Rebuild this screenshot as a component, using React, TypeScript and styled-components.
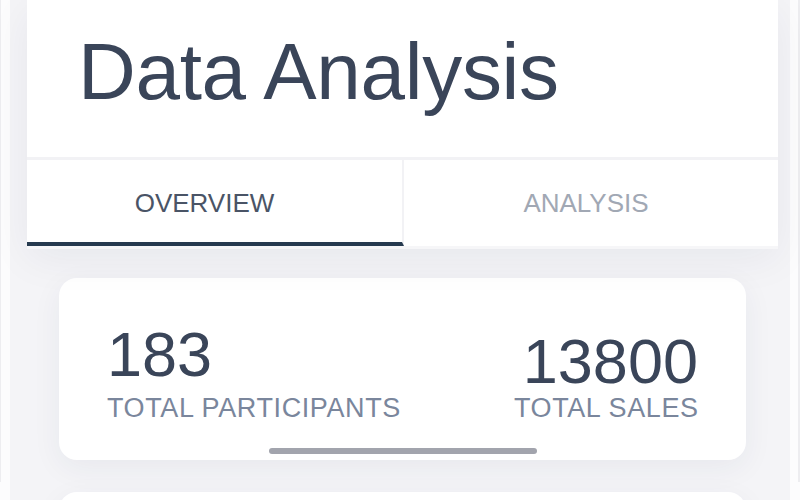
import { FC } from "react";
import styled, { createGlobalStyle } from "styled-components";

const colors = {
  ink: "#3a4559",
  tabActive: "#4a5466",
  tabIdle: "#a1a8b4",
  label: "#7a869c",
  line: "#f2f2f5",
  screen: "#f4f4f7",
};

const GlobalStyle = createGlobalStyle`
  html, body {
    margin: 0;
    padding: 0;
    background: #fcfcfd;
    font-family: "Liberation Sans", Arial, sans-serif;
  }
`;

const stats = [
  { value: "183", label: "TOTAL PARTICIPANTS", raise: 7 },
  { value: "13800", label: "TOTAL SALES", raise: 0 },
];

const App: FC = () => {
  return (
    <>
      <GlobalStyle />
      <Page>
        <Gutter $side="left" />
        <Screen>
          <Header>
            <TitleRow>
              <Title>Data Analysis</Title>
            </TitleRow>
            <Tabs>
              <Tab $active $shift={20}>
                OVERVIEW
              </Tab>
              <Tab $shift={10}>ANALYSIS</Tab>
            </Tabs>
          </Header>

          <Content>
            <Card>
              {stats.map((s, i) => (
                <Stat key={s.label} $align={i === 0 ? "flex-start" : "flex-end"}>
                  <Number $raise={s.raise}>{s.value}</Number>
                  <Label>{s.label}</Label>
                </Stat>
              ))}
              <ScrollHandle />
            </Card>
            <Card />
          </Content>
        </Screen>
        <Gutter $side="right" />
      </Page>
    </>
  );
};

export default App;

const Page = styled.div`
  display: flex;
  height: 500px;
  overflow: hidden;
`;

const Gutter = styled.div<{ $side: "left" | "right" }>`
  width: 10px;
  height: 482px;
  box-sizing: border-box;
  ${({ $side }) =>
    $side === "left"
      ? "border-left: 1px solid #ededf0;"
      : "border-right: 2px solid #ededf0;"}
`;

const Screen = styled.div`
  width: 780px;
  height: 500px;
  display: flex;
  flex-direction: column;
  padding: 0 12px 0 17px;
  box-sizing: border-box;
  background: ${colors.screen};
`;

const Header = styled.div`
  background: #fff;
  border-bottom: 3px solid #f6f6f8;
  box-shadow: 0 10px 40px rgba(20, 30, 60, 0.06);
  position: relative;
  z-index: 1;
`;

const TitleRow = styled.div`
  height: 160px;
  box-sizing: border-box;
  padding: 32px 0 0 51px;
  border-bottom: 3px solid ${colors.line};
`;

const Title = styled.h1`
  margin: 0;
  font-size: 80px;
  line-height: 80px;
  font-weight: 400;
  letter-spacing: -0.3px;
  color: ${colors.ink};
`;

const Tabs = styled.div`
  display: grid;
  grid-template-columns: 377px 1fr;
  height: 86px;
`;

const Tab = styled.div<{ $active?: boolean; $shift: number }>`
  display: flex;
  align-items: center;
  justify-content: center;
  box-sizing: border-box;
  font-size: 26px;
  color: ${({ $active }) => ($active ? colors.tabActive : colors.tabIdle)};
  border-bottom: 4px solid
    ${({ $active }) => ($active ? "#263a4f" : "transparent")};
  padding: 4px ${({ $shift }) => $shift}px 0 0;

  &:first-child {
    border-right: 2px solid ${colors.line};
  }
`;

const Content = styled.div`
  display: flex;
  flex-direction: column;
  gap: 32px;
  padding: 29px 32px 0;
`;

const Card = styled.div`
  position: relative;
  flex-shrink: 0;
  height: 182px;
  box-sizing: border-box;
  display: flex;
  justify-content: space-between;
  align-items: flex-end;
  padding: 0 48px 37px;
  background: #fff;
  border-radius: 18px;
  box-shadow: 0 8px 30px rgba(40, 50, 80, 0.06);
`;

const Stat = styled.div<{ $align: string }>`
  display: flex;
  flex-direction: column;
  align-items: ${({ $align }) => $align};
`;

const Number = styled.div<{ $raise: number }>`
  font-size: 63px;
  line-height: 63px;
  color: ${colors.ink};
  margin-bottom: ${({ $raise }) => $raise}px;
`;

const Label = styled.div`
  font-size: 27px;
  line-height: 30px;
  letter-spacing: 0.6px;
  margin-right: -0.6px;
  color: ${colors.label};
`;

const ScrollHandle = styled.div`
  position: absolute;
  left: 50%;
  bottom: 6px;
  width: 268px;
  height: 6px;
  transform: translateX(-50%);
  border-radius: 3px;
  background: #a2a4ad;
`;
